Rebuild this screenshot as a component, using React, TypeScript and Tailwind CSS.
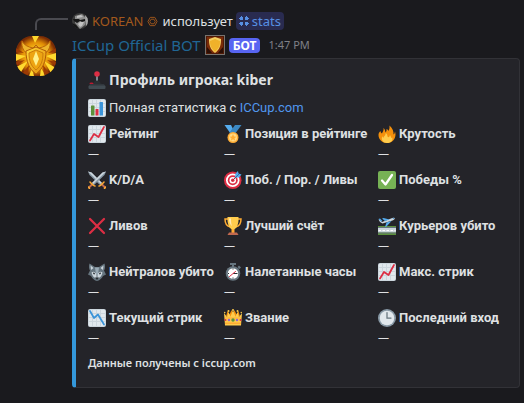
import type { ReactNode } from 'react';

interface StatField {
  icon: ReactNode;
  name: string;
  value: string;
}

function Emoji({ label, children }: { label: string; children: ReactNode }) {
  return (
    <svg viewBox="0 0 36 36" role="img" aria-label={label} className="size-[18px] shrink-0">
      {children}
    </svg>
  );
}

function ChartPaper() {
  return (
    <>
      <rect width="36" height="36" rx="4" fill="#CCD6DD" />
      <path fill="#E1E8ED" d="M2 2h6v6H2zM10 2h6v6h-6zM18 2h6v6h-6zM26 2h8v6h-8zM2 10h6v6H2zM10 10h6v6h-6zM18 10h6v6h-6zM26 10h8v6h-8zM2 18h6v6H2zM10 18h6v6h-6zM18 18h6v6h-6zM26 18h8v6h-8zM2 26h6v8H2zM10 26h6v8h-6zM18 26h6v8h-6zM26 26h8v8h-8z" />
    </>
  );
}

const Joystick = () => (
  <Emoji label="joystick">
    <path stroke="#99AAB5" strokeWidth="3" d="M18 8v18" />
    <circle cx="18" cy="6" r="5.500" fill="#DD2E44" />
    <path fill="#292F33" d="M11 25c0-4 4-6 7-6s7 2 7 6l8 2H3z" />
    <ellipse cx="7" cy="25" rx="4" ry="2" fill="#BE1931" />
    <path fill="#31373D" d="M4 26h28l3 5H1z" />
    <rect x="1" y="29" width="34" height="7" rx="2" fill="#414B52" />
  </Emoji>
);

const BarChart = () => (
  <Emoji label="bar chart">
    <ChartPaper />
    <path fill="#5C913B" d="M6 14a1 1 0 0 1 1-1h5a1 1 0 0 1 1 1v19H6z" />
    <path fill="#DD2E44" d="M15 21a1 1 0 0 1 1-1h4a1 1 0 0 1 1 1v12h-6z" />
    <path fill="#3B94D9" d="M23 7a1 1 0 0 1 1-1h5a1 1 0 0 1 1 1v26h-7z" />
  </Emoji>
);

const ChartUp = () => (
  <Emoji label="chart up">
    <ChartPaper />
    <path fill="none" stroke="#DD2E44" strokeWidth="3.500" strokeLinecap="round" strokeLinejoin="round" d="M4 31l8-13 9 6L32 4" />
  </Emoji>
);

const ChartDown = () => (
  <Emoji label="chart down">
    <ChartPaper />
    <path fill="none" stroke="#3B94D9" strokeWidth="3.500" strokeLinecap="round" strokeLinejoin="round" d="M4 4l8 14 8-7 12 20" />
  </Emoji>
);

const Medal = () => (
  <Emoji label="medal">
    <path fill="#55ACEE" d="M18 8L14 0H1l12 17h10z" />
    <path fill="#3B88C3" d="M22 0L11 15l4 4h6L35 0z" />
    <circle cx="18" cy="25" r="11" fill="#FFAC33" />
    <circle cx="18" cy="25" r="8" fill="#FFD983" />
    <path fill="#FFAC33" d="M18 18l2 5 5 .3-4 3.200 1.400 5L18 28.700l-4.400 2.800 1.400-5-4-3.200 5-.3z" />
  </Emoji>
);

const Fire = () => (
  <Emoji label="fire">
    <path fill="#F4900C" d="M35 19c0-2-.4-4-1-6-.5 3-1.300 5-3 6 .5-6-1.500-12-8-18 .4 5-.5 8-2 11-1-2-2-4-4-4 .6 3-.4 5-2 7-.6-3-1-7-4-9 1 5-2 8-3 11-2-1-3-3-3-5-3 3-4 5-4 8 0 9 8 16 17 16s17-7 17-17z" />
    <path fill="#FFCC4D" d="M28 24c0 1-.5 2-1 2-1 0-1-3-3-6-1 4-3 5-4 4-2-1 0-6-5-8 1 5-4 6-4 10-1-1-2-2-2-4-4 7 1 14 9 14s13-5 10-12z" />
  </Emoji>
);

const Swords = () => (
  <Emoji label="crossed swords">
    <path fill="#8899A6" d="M0 1l7 2 22 22-4 4L3 8z" />
    <path fill="#CCD6DD" d="M0 1l7 2 21 21-2 2z" />
    <path fill="#8899A6" d="M36 1l-7 2L7 25l4 4L33 8z" />
    <path fill="#CCD6DD" d="M36 1l-7 2L8 24l2 2z" />
    <path stroke="#BF6952" strokeWidth="4" strokeLinecap="round" d="M28 27l6 6M8 27l-6 6" />
    <path fill="none" stroke="#FFAC33" strokeWidth="3" strokeLinecap="round" d="M22 30c3 1 6-4 10-8M14 30c-3 1-6-4-10-8M33 35l2-3M3 35l-2-3" />
  </Emoji>
);

const Target = () => (
  <Emoji label="target">
    <circle cx="17.500" cy="18.500" r="17.500" fill="#DD2E44" />
    <circle cx="17.500" cy="18.500" r="13.500" fill="#fff" />
    <circle cx="17.500" cy="18.500" r="10" fill="#DD2E44" />
    <circle cx="17.500" cy="18.500" r="6.500" fill="#fff" />
    <circle cx="17.500" cy="18.500" r="3.500" fill="#DD2E44" />
    <path stroke="#9A2F3B" strokeWidth="2" d="M17 19L27 9" />
    <path fill="#55ACEE" d="M22 13l1-8 5-5 1 5 6 2-5 6z" />
    <path stroke="#226699" strokeWidth="1.500" d="M21 15l9-9" />
  </Emoji>
);

const Check = () => (
  <Emoji label="check">
    <rect width="36" height="36" rx="4" fill="#77B255" />
    <path fill="none" stroke="#fff" strokeWidth="4.500" strokeLinecap="round" strokeLinejoin="round" d="M8 19l7 8L28 8" />
  </Emoji>
);

const Cross = () => (
  <Emoji label="cross">
    <path stroke="#DD2E44" strokeWidth="4.500" strokeLinecap="round" d="M4 4l28 28M32 4L4 32" />
  </Emoji>
);

const Trophy = () => (
  <Emoji label="trophy">
    <path fill="none" stroke="#FFAC33" strokeWidth="3" d="M9 4H2c0 10 4 15 11 16M27 4h7c0 10-4 15-11 16" />
    <path fill="#FFAC33" d="M15 20h6v12h-6z" />
    <path fill="#FFCC4D" d="M7 0h22c1 14-4 25-11 25S6 14 7 0z" />
    <path fill="#FFE8B6" d="M10 3h4c0 6 0 10 2 15-4-3-6-8-6-15z" />
    <path fill="#C1694F" d="M10 31h16l3 5H7z" />
  </Emoji>
);

const Departure = () => (
  <Emoji label="departure">
    <path fill="#5C913B" d="M0 18h36v18H0z" />
    <path fill="#CCD6DD" d="M0 22h36v9H0z" />
    <path fill="#66757F" d="M0 20h36v2H0zM0 31h36v2H0z" />
    <path stroke="#fff" strokeWidth="2" strokeDasharray="5 3" d="M1 27h34" />
    <path fill="#CCD6DD" d="M4 10l5 3 20-6c3-1 6-4 4-5-2-1-5 0-7 1L8 10 4 6 1 5z" />
    <path fill="#55ACEE" d="M14 8L8 3l3-1 12 3zM17 11l-3 9 3-1 10-11zM1 4l3-1 5 5-3 1z" />
    <path fill="#3B88C3" d="M29 2l3-.5 1 1.500-3 1z" />
  </Emoji>
);

const Wolf = () => (
  <Emoji label="wolf">
    <path fill="#66757F" d="M3 1l11 7h8l11-7c2 5 1 11-1 14l4 8-6 3c-2 4-8 10-12 10S8 30 6 26l-6-3 4-8C2 12 1 6 3 1z" />
    <path fill="#CCD6DD" d="M5 5l6 5-5 4zM31 5l-6 5 5 4zM7 19c4-3 8-1 10 4v8c-4-1-9-5-10-12zM29 19c-4-3-8-1-10 4v8c4-1 9-5 10-12z" />
    <path fill="#99AAB5" d="M14 9h8l-2 14h-4z" />
    <path fill="#292F33" d="M10 19l4 1-1 3c-2 0-3-2-3-4zM26 19l-4 1 1 3c2 0 3-2 3-4zM14 29h8l-4 5z" />
  </Emoji>
);

const Stopwatch = () => (
  <Emoji label="stopwatch">
    <path fill="#66757F" d="M12 0h12v4h-4v5h-4V4h-4zM27 8l3-3 4 4-3 3z" />
    <circle cx="18" cy="21" r="14.500" fill="#66757F" />
    <circle cx="18" cy="21" r="10.500" fill="#fff" />
    <path stroke="#292F33" strokeWidth="2" d="M18 21h9M18 11v2M18 29v2M8 21h2" />
    <path stroke="#DD2E44" strokeWidth="2" strokeLinecap="round" d="M11 27l12-10" />
  </Emoji>
);

const Crown = () => (
  <Emoji label="crown">
    <path fill="#F4900C" d="M4 15L7 4l4 7 4-9 3 7 3-7 4 9 4-7 3 11z" />
    <path fill="#FFCC4D" d="M2 33L0 8l6 8 3-10 4 9 5-13 5 13 4-9 3 10 6-8-2 25z" />
    <path fill="#FFAC33" d="M2 27h32v3H2zM2 17h32v2H2z" />
    <g fill="#FFCC4D">
      <circle cx="1.500" cy="7" r="1.500" />
      <circle cx="9" cy="4" r="2" />
      <circle cx="18" cy="2" r="2" />
      <circle cx="27" cy="4" r="2" />
      <circle cx="34.500" cy="7" r="1.500" />
    </g>
    <circle cx="18" cy="22" r="3.500" fill="#5C913B" />
    <circle cx="10" cy="22" r="2.500" fill="#9266CC" />
    <circle cx="26" cy="22" r="2.500" fill="#9266CC" />
    <circle cx="3" cy="22" r="2" fill="#DD2E44" />
    <circle cx="33" cy="22" r="2" fill="#DD2E44" />
  </Emoji>
);

const Clock = () => (
  <Emoji label="clock">
    <circle cx="18" cy="18" r="18" fill="#8899A6" />
    <circle cx="18" cy="18" r="14.500" fill="#E1E8ED" />
    <path fill="none" stroke="#66757F" strokeWidth="2.500" strokeLinecap="round" d="M18 7v11h8" />
  </Emoji>
);

const FIELDS: StatField[] = [
  { icon: <ChartUp />, name: 'Рейтинг', value: '—' },
  { icon: <Medal />, name: 'Позиция в рейтинге', value: '—' },
  { icon: <Fire />, name: 'Крутость', value: '—' },
  { icon: <Swords />, name: 'K/D/A', value: '—' },
  { icon: <Target />, name: 'Поб. / Пор. / Ливы', value: '—' },
  { icon: <Check />, name: 'Победы %', value: '—' },
  { icon: <Cross />, name: 'Ливов', value: '—' },
  { icon: <Trophy />, name: 'Лучший счёт', value: '—' },
  { icon: <Departure />, name: 'Курьеров убито', value: '—' },
  { icon: <Wolf />, name: 'Нейтралов убито', value: '—' },
  { icon: <Stopwatch />, name: 'Налетанные часы', value: '—' },
  { icon: <ChartUp />, name: 'Макс. стрик', value: '—' },
  { icon: <ChartDown />, name: 'Текущий стрик', value: '—' },
  { icon: <Crown />, name: 'Звание', value: '—' },
  { icon: <Clock />, name: 'Последний вход', value: '—' },
];

function BotAvatar() {
  return (
    <svg viewBox="0 0 40 40" role="img" aria-label="ICCup" className="size-10 rounded-2xl">
      <defs>
        <radialGradient id="glow">
          <stop offset="0.300" stopColor="#ffd21f" />
          <stop offset="0.700" stopColor="#e08a05" />
          <stop offset="1" stopColor="#7a2c04" />
        </radialGradient>
        <linearGradient id="gold" x1="0" y1="0" x2="1" y2="1">
          <stop offset="0" stopColor="#ffdc3c" />
          <stop offset="1" stopColor="#e28a08" />
        </linearGradient>
      </defs>
      <rect width="40" height="40" fill="url(#glow)" />
      <path fill="#ffd92e" d="M0 18l10 2-10 5zM0 31l12-6-7 11zM40 17l-10 3 10 5zM40 32l-12-7 7 12zM13 40l3-8 2 8zM24 40l1-8 5 8zM16 0l3 7 4-7z" />
      <path fill="#9c3a04" d="M0 26l9-2-9 6zM40 26l-9-2 9 6zM7 37l6-8-1 10zM33 37l-6-8 1 10zM0 12l8 5-8-1zM40 12l-8 5 8-1z" />
      <path fill="#eeb52c" stroke="#b9650a" d="M6 5c2 4 6 6 11 7l3-3 3 3c5-1 9-3 11-7 1 6-2 11-6 13H12C8 16 5 11 6 5z" />
      <path fill="url(#gold)" stroke="#b05a08" d="M10 15l10-4 10 4c0 10-3 18-10 23-7-5-10-13-10-23z" />
      <path fill="#eda412" stroke="#c97a0c" d="M13 17l7-3 7 3c0 8-2 13-7 17-5-4-7-9-7-17z" />
      <path fill="#fff08c" d="M20 15l3 8-3 7-3-7z" />
    </svg>
  );
}

function UserAvatar() {
  return (
    <svg viewBox="0 0 16 16" aria-hidden="true" className="size-4 shrink-0 rounded-full">
      <rect width="16" height="16" fill="#3b3b3b" />
      <path fill="#8d8d8d" d="M3 3l7-2 4 4-1 7-5 4-5-6z" />
      <path fill="#c2c2c2" d="M5 3l4-1 2 2-6 1zM9 8l3 1-2 4-2 1-2-3z" />
      <path fill="#161616" d="M1 6l6 0 1 1 5-1v2l-3 1-2-1-3 2-3-2zM0 10l4 2 3 4H0z" />
      <path fill="#a8a8a8" d="M13 2l3 3v8l-2 2z" />
    </svg>
  );
}

function ShieldIcon() {
  return (
    <svg viewBox="0 0 20 20" aria-hidden="true" className="size-5 shrink-0">
      <rect x="0.500" y="0.500" width="19" height="19" fill="#4f1a06" stroke="#77736f" />
      <path fill="#7a2a08" d="M2 2h16v16H2z" />
      <path fill="#2b0f06" d="M2 12l5 6H2zM18 12l-5 6h5z" />
      <path fill="#f5cf62" d="M4 4l6-2 6 2c0 6-1 10-6 14C5 14 4 10 4 4z" />
      <path fill="#f0b12a" d="M5 6l5-2 5 2c0 5-1 7-5 11C6 13 5 11 5 6z" />
    </svg>
  );
}

export default function App() {
  return (
    <main className="min-h-screen bg-[#1a1a1e] pt-3 pr-1 pb-4 font-['Noto_Sans','Open_Sans',sans-serif] text-[13px] leading-[18px] text-[#dfe0e2]">
      {/* reply line */}
      <div className="flex h-[18px] items-center pl-[35px]">
        <div className="mr-1 h-3 w-[33px] shrink-0 self-end rounded-tl-md border-t-2 border-l-2 border-[#4a4a50]" />
        <UserAvatar />
        <span className="ml-1 flex items-center gap-1 text-[#a3591d]">
          KOREAN
          <svg viewBox="0 0 12 12" aria-hidden="true" className="size-[11px]" fill="none" stroke="currentColor">
            <path d="M3.500 1.500h5L11 6l-2.500 4.500h-5L1 6z" />
            <path d="M4.500 3.500h3L9 6 7.500 8.500h-3L3 6z" />
          </svg>
        </span>
        <span className="ml-1">использует</span>
        <button type="button" className="ml-[3px] flex items-center gap-[3px] rounded-sm bg-[#292b50] px-[3px] text-[#5790e4]">
          <svg viewBox="0 0 10 10" aria-hidden="true" className="size-[10px]" fill="currentColor">
            <path d="M1 1h3v3H1zM6 1h3v3H6zM1 6h3v3H1zM6 6h3v3H6z" />
            <path d="M0 2h2v1H0zM8 2h2v1H8zM2 0h1v2H2zM7 0h1v2H7zM0 7h2v1H0zM8 7h2v1H8zM2 8h1v2H2zM7 8h1v2H7z" />
          </svg>
          stats
        </button>
      </div>

      <div className="flex">
        <div className="w-[72px] shrink-0 pt-[6px] pl-4">
          <BotAvatar />
        </div>

        <div className="min-w-0 flex-1">
          <header className="flex h-7 items-center pt-[2px]">
            <span className="text-[15px] text-[#206694]">ICCup Official BOT</span>
            <span className="ml-1 flex items-center gap-1">
              <ShieldIcon />
              <span className="rounded bg-[#5865f2] px-1 text-[12px] leading-[15px] font-bold text-white">БОТ</span>
            </span>
            <time className="ml-2 text-[11px] text-[#7f8087]">1:47 PM</time>
          </header>

          <article className="rounded border border-l-4 border-[#323237] border-l-[#3498db] bg-[#242429] px-3 pt-[10px] pb-4">
            <h1 className="flex h-[22px] items-center gap-[3px] text-[14px] font-bold">
              <Joystick />
              Профиль игрока: kiber
            </h1>
            <p className="mt-2 flex items-center gap-[3px] font-['Roboto','Noto_Sans',sans-serif]">
              <BarChart />
              <span>
                Полная статистика с{' '}
                <a href="#" className="text-[#5197ed]">ICCup.com</a>
              </span>
            </p>

            <dl className="mt-2 grid grid-cols-[128px_146px_1fr] gap-2">
              {FIELDS.map((f) => (
                <div key={f.name}>
                  <dt className="flex items-center gap-[3px] font-['Roboto','Noto_Sans',sans-serif] font-bold whitespace-nowrap">
                    {f.icon}
                    {f.name}
                  </dt>
                  <dd className="text-[11px] leading-5">{f.value}</dd>
                </div>
              ))}
            </dl>

            <footer className="mt-2 text-[11px] leading-4 font-semibold">Данные получены с iccup.com</footer>
          </article>
        </div>
      </div>
    </main>
  );
}
